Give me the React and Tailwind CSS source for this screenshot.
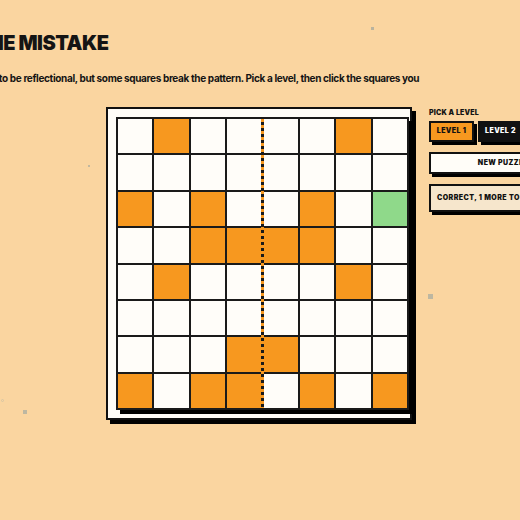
import React from "react";

// 0 = empty, 1 = filled, 2 = flagged correctly
const BOARD = [
  "01000010",
  "00000000",
  "10100102",
  "00111100",
  "01000010",
  "00000000",
  "00011000",
  "10110101",
];

const cellClass = {
  "0": "bg-[#fffdf9]",
  "1": "bg-[#f7981f]",
  "2": "bg-[#8fd98a]",
};

function Board() {
  return (
    <div className="w-[306px] shrink-0 border-2 border-[#111] bg-[#fffdf8] p-[8px] shadow-[4px_4px_0_#000]">
      <div className="relative grid w-[293px] grid-cols-8 gap-[2px] border-2 border-[#1a1a1a] bg-[#1a1a1a] shadow-[4px_4px_0_#000]">
        {BOARD.flatMap((row, r) =>
          row.split("").map((v, c) => (
            <div key={`${r}-${c}`} className={`aspect-square ${cellClass[v]}`} />
          ))
        )}
        {/* mirror axis */}
        <div className="absolute top-0 bottom-0 left-[142.5px] w-[3px] bg-[repeating-linear-gradient(to_bottom,#f7981f_0_3px,#1a1a1a_3px_6px)]" />
      </div>
    </div>
  );
}

function Panel() {
  return (
    <div className="flex w-[148px] shrink-0 flex-col pt-[1px]">
      <div className="text-[7px] leading-[9px] font-black tracking-[0.2px]">PICK A LEVEL</div>
      <div className="mt-[4px] flex gap-[4px]">
        <button className="h-[21px] w-[45px] border-2 border-[#111] bg-[#f7981f] text-[7px] font-black tracking-[0.4px] text-[#111] shadow-[3px_3px_0_#000]">
          LEVEL 1
        </button>
        <button className="h-[21px] w-[45px] border-2 border-[#111] bg-[#111] text-[7px] font-black tracking-[0.4px] text-white shadow-[3px_3px_0_#000]">
          LEVEL 2
        </button>
        <button className="h-[21px] w-[45px] border-2 border-[#111] bg-[#111] text-[7px] font-black tracking-[0.4px] text-white shadow-[3px_3px_0_#000]">
          LEVEL 3
        </button>
      </div>
      <button className="mt-[10px] h-[22px] w-full border-2 border-[#111] bg-[#fffdf8] text-[7px] font-black tracking-[0.4px] text-[#111] shadow-[3px_3px_0_#000]">
        NEW PUZZLE
      </button>
      <div className="mt-[10px] flex h-[28px] w-full items-center border-2 border-[#111] bg-[#f6e6cc] px-[6px] text-[7px] font-black tracking-[0.45px] text-[#111] shadow-[3px_3px_0_#000]">
        CORRECT, 1 MORE TO GO!
      </div>
    </div>
  );
}

export default function App() {
  return (
    <div className="relative h-[520px] w-[520px] overflow-hidden bg-[#fad5a0] font-['Inter',sans-serif] text-[#141414]">
      {/* floating specks */}
      <span className="absolute left-[371px] top-[27px] h-[3px] w-[3px] bg-[#b9b39e]" />
      <span className="absolute left-[88px] top-[165px] h-[2px] w-[2px] bg-[#c2b89f]" />
      <span className="absolute left-[428px] top-[294px] h-[5px] w-[5px] bg-[#bdb7a1]" />
      <span className="absolute left-[23px] top-[410px] h-[4px] w-[4px] bg-[#bdb7a1]" />
      <span className="absolute left-[1px] top-[399px] h-[3px] w-[3px] rounded-full border border-[#d8c6a4]" />

      <header className="-ml-[81px] pt-[32px]">
        <h1 className="text-[20px] leading-[22px] font-black tracking-tight">SPOT THE MISTAKE</h1>
        <p className="ml-[16px] mt-[17px] h-[14px] w-[505px] overflow-hidden text-[10px] leading-[14px] font-bold tracking-[-0.35px]">
          It&apos;s supposed to be reflectional, but some squares break the pattern. Pick a level, then click the squares you think are wrong.
        </p>
      </header>

      <main className="ml-[106px] mt-[22px] flex items-start gap-[17px]">
        <Board />
        <Panel />
      </main>
    </div>
  );
}
